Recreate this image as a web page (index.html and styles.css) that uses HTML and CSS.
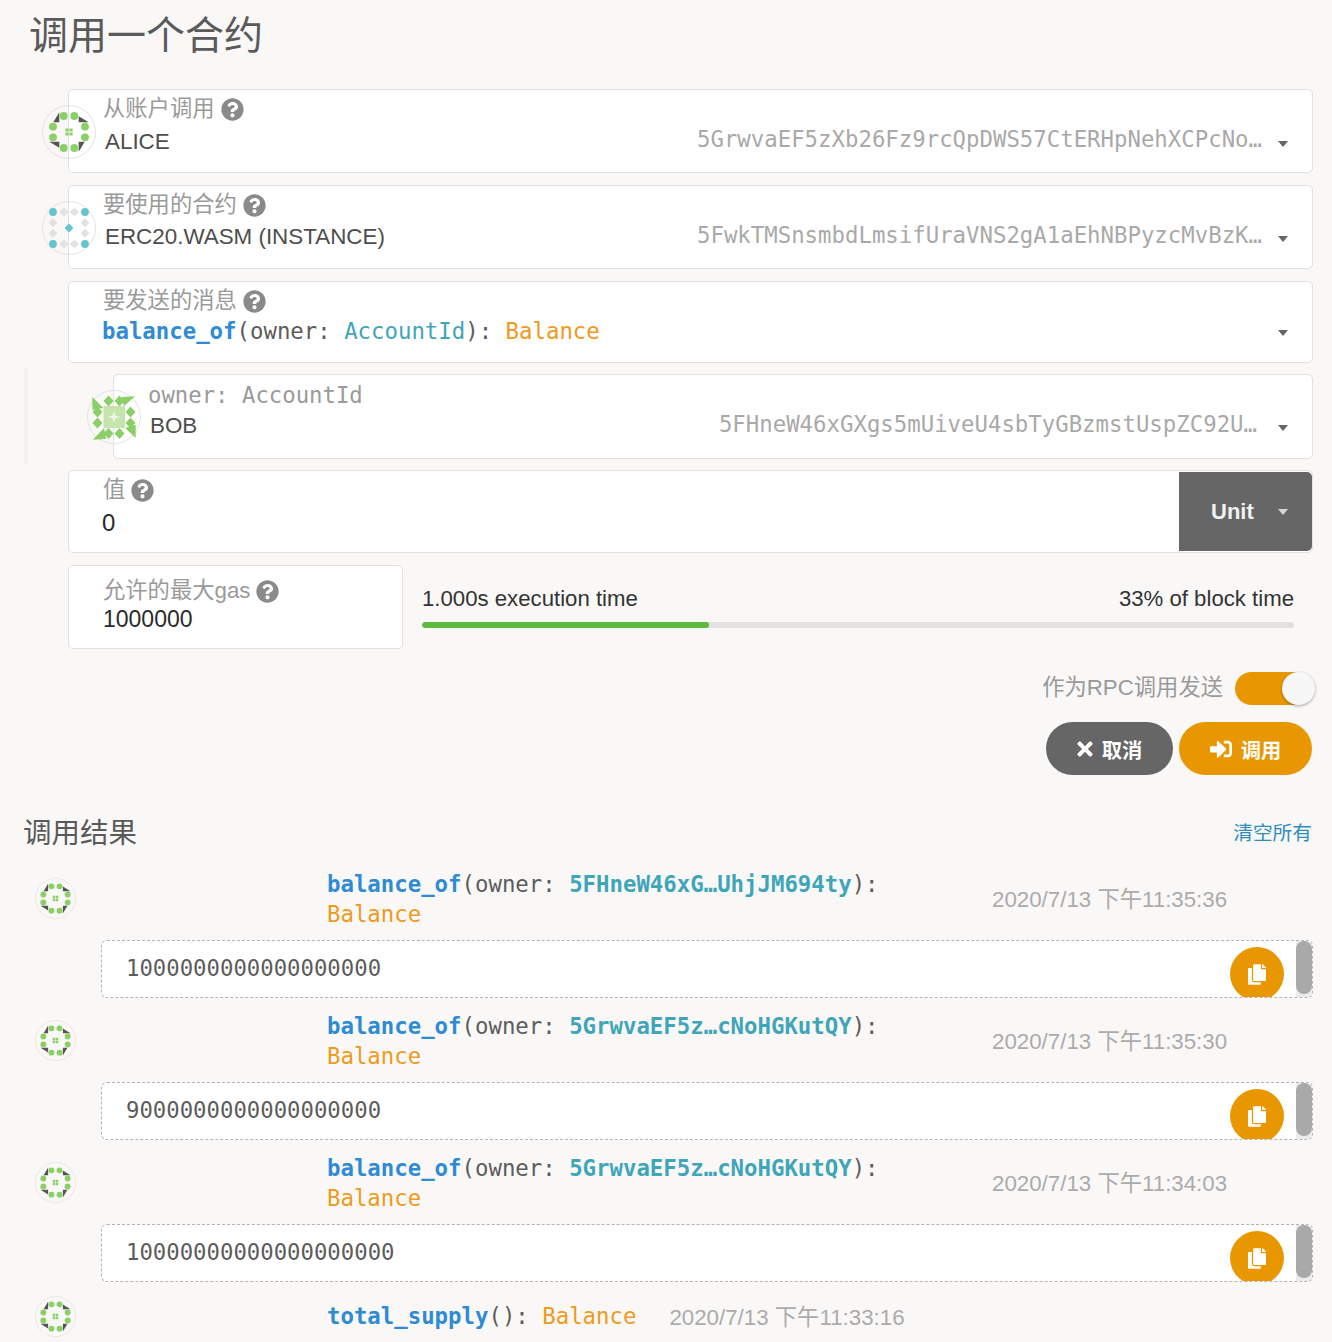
FILE: index.html
```html
<!DOCTYPE html>
<html lang="zh">
<head>
<meta charset="utf-8">
<title>调用一个合约</title>
<link rel="stylesheet" href="styles.css">
</head>
<body>
<svg class="defs" width="0" height="0" aria-hidden="true">
  <defs>
    <symbol id="q" viewBox="0 0 512 512"><path d="M504 256c0 136.997-111.043 248-248 248S8 392.997 8 256C8 119.083 119.043 8 256 8s248 111.083 248 248zM262.655 90c-54.497 0-89.255 22.957-116.549 63.758-3.536 5.286-2.353 12.415 2.715 16.258l34.699 26.31c5.205 3.947 12.621 3.008 16.665-2.122 17.864-22.658 30.113-35.797 57.303-35.797 20.429 0 45.698 13.148 45.698 32.958 0 14.976-12.363 22.667-32.534 33.976C247.128 238.528 216 254.941 216 296v4c0 6.627 5.373 12 12 12h56c6.627 0 12-5.373 12-12v-1.333c0-28.462 83.186-29.647 83.186-106.667 0-58.002-60.165-102-116.531-102zM256 338c-25.365 0-46 20.635-46 46 0 25.364 20.635 46 46 46s46-20.636 46-46c0-25.365-20.635-46-46-46z"/></symbol>
    <symbol id="x" viewBox="0 0 352 512"><path d="M242.72 256l100.07-100.07c12.28-12.28 12.28-32.19 0-44.48l-22.24-22.24c-12.28-12.28-32.19-12.28-44.48 0L176 189.28 75.93 89.21c-12.28-12.28-32.19-12.28-44.48 0L9.21 111.45c-12.28 12.28-12.28 32.19 0 44.48L109.28 256 9.21 356.07c-12.28 12.28-12.28 32.19 0 44.48l22.24 22.24c12.28 12.28 32.2 12.28 44.48 0L176 322.72l100.07 100.07c12.28 12.28 32.2 12.28 44.48 0l22.24-22.24c12.28-12.28 12.28-32.19 0-44.48L242.72 256z"/></symbol>
    <symbol id="signin" viewBox="0 0 512 512"><path d="M416 448h-84c-6.6 0-12-5.4-12-12v-40c0-6.6 5.4-12 12-12h84c17.7 0 32-14.3 32-32V160c0-17.7-14.3-32-32-32h-84c-6.6 0-12-5.4-12-12V76c0-6.6 5.4-12 12-12h84c53 0 96 43 96 96v192c0 53-43 96-96 96zm-47-201L201 79c-15-15-41-4.5-41 17v96H24c-13.3 0-24 10.7-24 24v96c0 13.3 10.7 24 24 24h136v96c0 21.5 26 32 41 17l168-168c9.3-9.4 9.3-24.6 0-34z"/></symbol>
    <symbol id="copy" viewBox="0 0 448 512"><path d="M320 448v40c0 13.255-10.745 24-24 24H24c-13.255 0-24-10.745-24-24V120c0-13.255 10.745-24 24-24h72v296c0 30.879 25.121 56 56 56h168zm0-344V0H152c-13.255 0-24 10.745-24 24v368c0 13.255 10.745 24 24 24h272c13.255 0 24-10.745 24-24V128H344c-13.2 0-24-10.8-24-24zm120.971-31.029L375.029 7.029A24 24 0 0 0 358.059 0H352v96h96v-6.059a24 24 0 0 0-7.029-16.97z"/></symbol>
    <symbol id="alice" viewBox="-27 -27 54 54">
      <circle r="26.500" fill="none" stroke="#e4e3e1"/>
      <g fill="#555">
        <path d="M-9.700-19.700L-15.700-9.700H-9.700z"/>
        <path d="M19.700-9.700L9.700-15.700V-9.700z"/>
        <path d="M9.700 19.700L15.700 9.700H9.700z"/>
        <path d="M-19.700 9.700L-9.700 15.700V9.700z"/>
      </g>
      <g fill="#8ccf66">
        <circle cx="-5.300" cy="-16" r="3.900"/><circle cx="5.300" cy="-16" r="3.900"/>
        <circle cx="-16" cy="-5.300" r="3.900"/><circle cx="16" cy="-5.300" r="3.900"/>
        <circle cx="-16" cy="5.300" r="3.900"/><circle cx="16" cy="5.300" r="3.900"/>
        <circle cx="-5.300" cy="16" r="3.900"/><circle cx="5.300" cy="16" r="3.900"/>
        <path d="M-3.600-3.600h3.200v3.200h-3.200zM.4-3.600h3.200v3.200H.4zM-3.600.4h3.200v3.200h-3.200zM.4.4h3.200v3.200H.4z"/>
      </g>
    </symbol>
    <symbol id="erc" viewBox="-27 -27 54 54">
      <circle r="26.500" fill="none" stroke="#e4e3e1"/>
      <g fill="#e2e2e2">
        <path d="M-5.300-20.500l4.500 4.500-4.500 4.500-4.500-4.500zM5.300-20.500l4.500 4.500-4.500 4.500-4.500-4.500zM-5.300 11.500l4.500 4.500-4.500 4.500-4.500-4.500zM5.300 11.500l4.500 4.500-4.500 4.500-4.500-4.500zM-16-9.800l4.500 4.500-4.500 4.500-4.500-4.500zM16-9.800l4.500 4.500-4.500 4.500-4.500-4.500zM-16 .8l4.500 4.500-4.500 4.500-4.500-4.500zM16 .8l4.500 4.500-4.500 4.500-4.500-4.500z"/>
      </g>
      <g fill="#66c5cc">
        <circle cx="-16" cy="-16" r="3.900"/><circle cx="16" cy="-16" r="3.900"/>
        <circle cx="-16" cy="16" r="3.900"/><circle cx="16" cy="16" r="3.900"/>
        <path d="M0-4.500l4.500 4.500-4.500 4.500-4.500-4.500z"/>
      </g>
    </symbol>
    <symbol id="bob" viewBox="-27 -27 54 54">
      <circle r="26.500" fill="none" stroke="#e4e3e1"/>
      <path d="M-10.500-11h21.500v22h-21.500z" fill="#c6e5ae"/>
      <path d="M0-6l1.500 4.500L6 0 1.500 1.500 0 6-1.500 1.500-6 0-1.500-1.500z" fill="#eef7e6"/>
      <g fill="#8ccf66">
        <path d="M-5.500-21.500l5 5.500-5 5.500-5-5.500zM5.500-21.500l5 5.500-5 5.500-5-5.500zM-5.500 11l5 5.500-5 5.500-5-5.500zM5.500 11l5 5.500-5 5.500-5-5.500zM-16.500-10.500l5 5.500-5 5.500-5-5.500zM16.500-10.500l5 5.500-5 5.500-5-5.500zM-16.500 .5l5 5.500-5 5.500-5-5.500zM16.500 .5l5 5.500-5 5.500-5-5.500z"/>
        <path d="M-21.700-20V-7.300L-10.700-9z"/>
        <path d="M21-20.700L7.700-20 10-10.700z"/>
        <path d="M21.700 21V7.700L11 11z"/>
        <path d="M-21.300 22.700L-8 22-10 11z"/>
      </g>
    </symbol>
  </defs>
</svg>

<main class="page">
  <h1 class="title">调用一个合约</h1>

  <section class="form">
    <div class="field">
      <svg class="avatar"><use href="#alice"/></svg>
      <div class="label">从账户调用<svg class="help"><use href="#q"/></svg></div>
      <div class="value">
        <span class="name">ALICE</span>
        <span class="addr">5GrwvaEF5zXb26Fz9rcQpDWS57CtERHpNehXCPcNo…</span>
        <i class="caret"></i>
      </div>
    </div>

    <div class="field field-tight">
      <svg class="avatar"><use href="#erc"/></svg>
      <div class="label">要使用的合约<svg class="help"><use href="#q"/></svg></div>
      <div class="value">
        <span class="name">ERC20.WASM (INSTANCE)</span>
        <span class="addr">5FwkTMSnsmbdLmsifUraVNS2gA1aEhNBPyzcMvBzK…</span>
        <i class="caret"></i>
      </div>
    </div>

    <div class="field field-short">
      <div class="label">要发送的消息<svg class="help"><use href="#q"/></svg></div>
      <div class="value value-code">
        <span class="code"><b class="fn">balance_of</b>(owner: <span class="type">AccountId</span>): <span class="ret">Balance</span></span>
        <i class="caret"></i>
      </div>
    </div>

    <div class="param">
      <div class="field field-param">
        <svg class="avatar"><use href="#bob"/></svg>
        <div class="label label-mono">owner: AccountId</div>
        <div class="value">
          <span class="name">BOB</span>
          <span class="addr addr-short">5FHneW46xGXgs5mUiveU4sbTyGBzmstUspZC92U…</span>
          <i class="caret"></i>
        </div>
      </div>
    </div>

    <div class="field field-value">
      <div class="value-main">
        <div class="label">值<svg class="help"><use href="#q"/></svg></div>
        <div class="number">0</div>
      </div>
      <div class="unit">Unit<i class="caret caret-light"></i></div>
    </div>

    <div class="gas-row">
      <div class="field field-gas">
        <div class="label">允许的最大gas<svg class="help"><use href="#q"/></svg></div>
        <div class="gas-number">1000000</div>
      </div>
      <div class="progress">
        <div class="progress-text"><span>1.000s execution time</span><span>33% of block time</span></div>
        <div class="bar"><div class="bar-fill" style="width:32.9%"></div></div>
      </div>
    </div>

    <div class="toggle-row">
      <span class="toggle-label">作为RPC调用发送</span>
      <span class="toggle"><span class="knob"></span></span>
    </div>

    <div class="actions">
      <button class="btn btn-grey"><svg class="ic-x"><use href="#x"/></svg>取消</button>
      <button class="btn btn-orange"><svg class="ic-in"><use href="#signin"/></svg>调用</button>
    </div>
  </section>

  <section class="results">
    <div class="results-head">
      <h2 class="subtitle">调用结果</h2>
      <a class="clear">清空所有</a>
    </div>

    <div class="call">
      <svg class="mini"><use href="#alice"/></svg>
      <div class="code call-text"><b class="fn">balance_of</b>(owner: <b class="type">5FHneW46xG…UhjJM694ty</b>):<br><span class="ret">Balance</span></div>
      <time class="date">2020/7/13 下午11:35:36</time>
    </div>
    <div class="output">
      <span class="out-num">1000000000000000000</span>
      <span class="copy"><svg class="ic-copy"><use href="#copy"/></svg></span>
      <span class="scroll"></span>
    </div>

    <div class="call">
      <svg class="mini"><use href="#alice"/></svg>
      <div class="code call-text"><b class="fn">balance_of</b>(owner: <b class="type">5GrwvaEF5z…cNoHGKutQY</b>):<br><span class="ret">Balance</span></div>
      <time class="date">2020/7/13 下午11:35:30</time>
    </div>
    <div class="output">
      <span class="out-num">9000000000000000000</span>
      <span class="copy"><svg class="ic-copy"><use href="#copy"/></svg></span>
      <span class="scroll"></span>
    </div>

    <div class="call">
      <svg class="mini"><use href="#alice"/></svg>
      <div class="code call-text"><b class="fn">balance_of</b>(owner: <b class="type">5GrwvaEF5z…cNoHGKutQY</b>):<br><span class="ret">Balance</span></div>
      <time class="date">2020/7/13 下午11:34:03</time>
    </div>
    <div class="output">
      <span class="out-num">10000000000000000000</span>
      <span class="copy"><svg class="ic-copy"><use href="#copy"/></svg></span>
      <span class="scroll"></span>
    </div>

    <div class="call call-last">
      <svg class="mini"><use href="#alice"/></svg>
      <div class="code call-text call-text-inline"><b class="fn">total_supply</b>(): <span class="ret">Balance</span></div>
      <time class="date">2020/7/13 下午11:33:16</time>
    </div>
  </section>
</main>
</body>
</html>
```
FILE: styles.css
```css
* { box-sizing: border-box; }
html, body { margin: 0; padding: 0; }
body {
  background: #f9f8f7;
  color: #4e4e4e;
  font-family: "Liberation Sans", "Noto Sans CJK SC", sans-serif;
  font-size: 22.4px;
  overflow: hidden;
}
.defs { position: absolute; }
.page { padding: 0 19px 0 24px; height: 1342px; overflow: hidden; }

.title {
  margin: 0;
  height: 89px;
  padding: 11px 0 0 5px;
  font-size: 39px;
  line-height: 50px;
  font-weight: 400;
  color: #5a5a5a;
}

.form { display: flex; flex-direction: column; gap: 12px; padding-left: 44px; }

.field {
  position: relative;
  height: 84px;
  background: #fff;
  border: 1px solid #e2e1df;
  border-radius: 5px;
  padding: 6px 24px 0 34px;
}
.field-short { height: 82px; }
.field-tight .value { margin-top: 0; }
.field-tight .addr { top: -2px; }
.avatar {
  position: absolute;
  left: -27px;
  top: 15px;
  width: 54px;
  height: 54px;
}
.label {
  display: flex;
  align-items: center;
  height: 26px;
  color: #9a9a9a;
  font-size: 22.3px;
  line-height: 26px;
}
.label-mono {
  font-family: "DejaVu Sans Mono", monospace;
  font-size: 22.3px;
}
.help { width: 23px; height: 23px; margin-left: 6px; fill: #8a8a8a; }

.value { display: flex; align-items: center; height: 38px; padding-left: 2px; margin-top: 1px; }
.name { color: #4e4e4e; }
.addr {
  margin-left: auto;
  font-family: "DejaVu Sans Mono", monospace;
  font-size: 22.35px;
  color: #a9a9a9;
  position: relative;
  top: -3px;
}
.addr-short { margin-right: 5px; top: -2px; }
.caret {
  flex: none;
  width: 0;
  height: 0;
  margin-left: 16px;
  border-left: 5.500px solid transparent;
  border-right: 5.500px solid transparent;
  border-top: 6px solid #666;
  position: relative;
  top: 2px;
}
.caret-light { border-top-color: #d6d6d6; margin-left: 24px; top: 0; }

.code { font-family: "DejaVu Sans Mono", monospace; font-size: 22.35px; color: #5c5c5c; line-height: 30px; }
.code b { font-weight: 700; }
.fn { color: #2f8bd3; }
.type { color: #3fa5b9; font-weight: 400; }
.ret { color: #ef9a1c; }
.value-code { padding-left: 0; margin: 0 0 0 -1px; height: 34px; }
.value-code .code { margin-right: auto; }
.value-code .caret { top: 2px; }

.param {
  margin-left: -44px;
  padding: 6px 0 5px 85px;
  border-left: 4px solid #f3f2f0;
  margin-top: -7px;
  margin-bottom: -6px;
}
.field-param { height: 85px; }
.field-param .label { margin-top: 1px; }
.field-param .value { margin-top: -1px; }

.field-value { display: flex; height: 83px; padding: 0; }
.value-main { flex: 1; padding: 6px 0 0 34px; }
.number { color: #2a2a2a; font-size: 24px; line-height: 40px; margin-left: -1px; }
.unit {
  width: 133px;
  margin: 1px 0;
  background: #666;
  color: #f1f1f1;
  font-weight: 700;
  border-radius: 0 5px 5px 0;
  display: flex;
  align-items: center;
  padding-left: 32px;
  font-size: 22px;
}

.gas-row { display: flex; gap: 19px; }
.field-gas { width: 335px; flex: none; padding-top: 12px; }
.gas-number { color: #2a2a2a; font-size: 23px; line-height: 28px; margin-top: 1px; }
.progress { flex: 1; padding: 21px 19px 0 0; }
.progress-text { display: flex; justify-content: space-between; color: #333; font-size: 22.2px; line-height: 26px; }
.bar { height: 6px; margin-top: 10px; background: #e2e1df; border-radius: 3px; overflow: hidden; }
.bar-fill { height: 100%; background: #5dba3e; border-radius: 3px; }

.toggle-row { display: flex; justify-content: flex-end; align-items: center; gap: 12px; margin: 11px 1px 0 0; height: 33px; }
.toggle-label { color: #9a9a9a; font-size: 22.3px; position: relative; top: -4px; }
.toggle { position: relative; width: 77px; height: 33px; background: #e99700; border-radius: 17px; }
.knob {
  position: absolute;
  right: -3px;
  top: 0;
  width: 33px;
  height: 33px;
  border-radius: 50%;
  background: #f7f7f8;
  box-shadow: 0 1px 3px rgba(0,0,0,.35);
}

.actions { display: flex; justify-content: flex-end; gap: 6px; margin: 5px 1px 0 0; }
.btn {
  display: flex;
  align-items: center;
  justify-content: center;
  height: 53px;
  border: 0;
  border-radius: 27px;
  color: #fff;
  font-family: "Liberation Sans", "Noto Sans CJK SC", sans-serif;
  font-size: 20.300px;
  font-weight: 700;
}
.btn-grey { width: 127px; background: #666; }
.btn-orange { width: 133px; background: #e99700; }
.ic-x { width: 16px; height: 22px; fill: #fff; margin-right: 9px; }
.ic-in { width: 22px; height: 22px; fill: #fff; margin-right: 9px; }

.results { margin-top: 25px; }
.results-head { display: flex; justify-content: space-between; align-items: flex-start; height: 69px; }
.subtitle { margin: 0 0 0 -1px; font-size: 28.500px; font-weight: 400; color: #5a5a5a; line-height: 66px; }
.clear { color: #2e8dbb; font-size: 19.700px; line-height: 66px; margin-right: 1px; }

.call { display: flex; align-items: center; height: 59px; padding-left: 11px; }
.mini { flex: none; width: 41px; height: 41px; }
.call-text { width: 664px; margin-left: 251px; flex: none; line-height: 30px; }
.date { color: #ababab; font-size: 22.300px; position: relative; top: -2px; margin-left: 1px; }
.call-last { height: 42px; margin-top: 13px; }
.call-text-inline { width: auto; }
.call-last .date { margin-left: 33px; top: -1px; }

.output {
  position: relative;
  margin: 12px 0 13px 77px;
  height: 58px;
  background: #fff;
  border: 1px dashed #b3b3b3;
  border-radius: 6px;
  padding-left: 24px;
  overflow: hidden;
  display: flex;
  align-items: center;
}
.out-num { font-family: "DejaVu Sans Mono", monospace; font-size: 22.300px; color: #5c5c5c; position: relative; top: -1px; }
.copy {
  position: absolute;
  right: 28px;
  top: 6px;
  width: 54px;
  height: 54px;
  border-radius: 50%;
  background: #e99700;
  display: flex;
  align-items: center;
  justify-content: center;
}
.ic-copy { width: 18px; height: 21px; fill: #fff; }
.scroll {
  position: absolute;
  right: 0;
  top: 0;
  bottom: 0;
  width: 16px;
  background: #ebebeb;
}
.scroll::before {
  content: "";
  display: block;
  height: 53px;
  border-radius: 8px;
  background: #a9a9a9;
}
```
